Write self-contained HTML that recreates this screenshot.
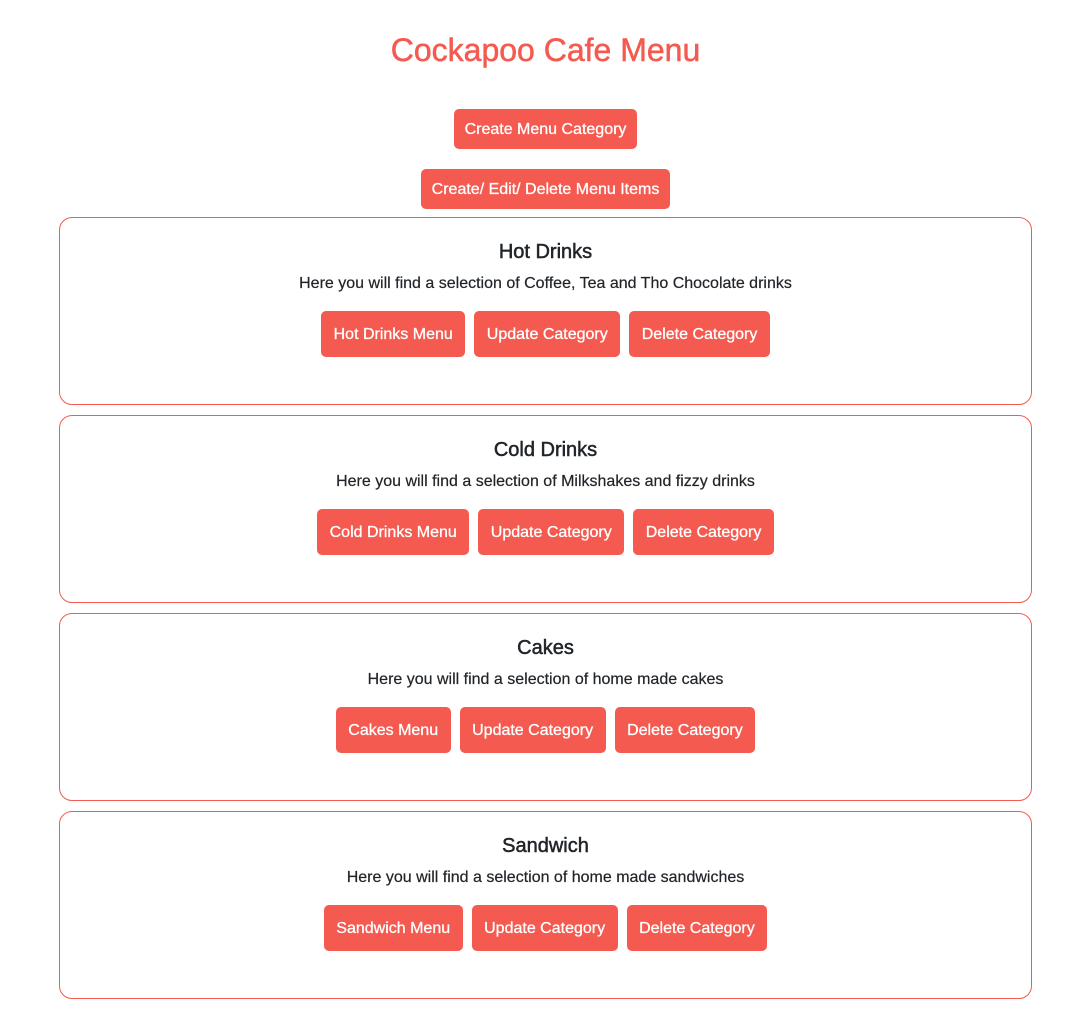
<!DOCTYPE html>
<html><head><meta charset="utf-8"><style>
*{box-sizing:border-box;margin:0;padding:0}
body{width:1081px;height:1027px;background:#fff;font-family:"Liberation Sans",sans-serif;color:#212529;position:relative;overflow:hidden}
.wrap{position:absolute;left:59px;width:973px;top:0}
h1{position:absolute;left:0;width:100%;top:30px;text-align:center;font-weight:400;font-size:32px;line-height:40px;color:#f45a50;-webkit-text-stroke:0.5px #f45a50}
.tb{position:absolute;left:0;width:100%;text-align:center}
.btn{display:inline-block;background:#f45a50;color:#fff;border-radius:5px;font-size:16px;white-space:nowrap;vertical-align:top;-webkit-text-stroke:0.3px #fff}
.top{height:40px;line-height:41px;padding:0 11px}
.card{position:absolute;left:0;width:973px;height:188px;border:1px solid #f45a50;border-radius:13px;text-align:center}
.card h2{font-size:20px;font-weight:400;position:absolute;top:22px;width:100%;line-height:24px;-webkit-text-stroke:0.5px #212529}
.card p{font-size:16px;position:absolute;top:56px;width:100%;line-height:20px;-webkit-text-stroke:0.2px #212529}
.card .row{position:absolute;top:93px;width:100%;display:flex;justify-content:center;gap:9px}
.card .btn{height:46px;line-height:47px;padding:0 12.5px}
</style></head><body>
<div class="wrap">
<h1>Cockapoo Cafe Menu</h1>
<div class="tb" style="top:109px"><span class="btn top">Create Menu Category</span></div>
<div class="tb" style="top:169px"><span class="btn top">Create/ Edit/ Delete Menu Items</span></div>
<div class="card" style="top:217px"><h2>Hot Drinks</h2><p>Here you will find a selection of Coffee, Tea and Tho Chocolate drinks</p><div class="row"><span class="btn">Hot Drinks Menu</span><span class="btn">Update Category</span><span class="btn">Delete Category</span></div></div>
<div class="card" style="top:415px"><h2>Cold Drinks</h2><p>Here you will find a selection of Milkshakes and fizzy drinks</p><div class="row"><span class="btn">Cold Drinks Menu</span><span class="btn">Update Category</span><span class="btn">Delete Category</span></div></div>
<div class="card" style="top:613px"><h2>Cakes</h2><p>Here you will find a selection of home made cakes</p><div class="row"><span class="btn">Cakes Menu</span><span class="btn">Update Category</span><span class="btn">Delete Category</span></div></div>
<div class="card" style="top:811px"><h2>Sandwich</h2><p>Here you will find a selection of home made sandwiches</p><div class="row"><span class="btn">Sandwich Menu</span><span class="btn">Update Category</span><span class="btn">Delete Category</span></div></div>
</div>
</body></html>
